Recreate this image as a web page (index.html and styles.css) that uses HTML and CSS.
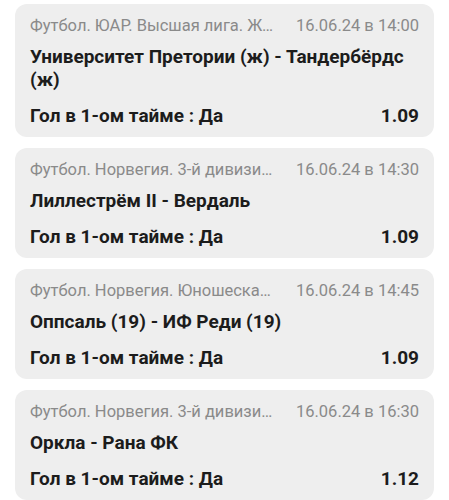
FILE: index.html
```html
<!DOCTYPE html>
<html lang="ru">
<head>
    <meta charset="UTF-8">
    <meta name="viewport" content="width=device-width, initial-scale=1.0">
    <title>Купон</title>
    <link rel="stylesheet" href="styles.css">
</head>
<body>
    <div class="bets">
        <!-- Bet card -->
        <div class="bet">
            <div class="bet-head">
                <span class="bet-league">Футбол. ЮАР. Высшая лига. Женщины</span>
                <span class="bet-date">16.06.24 в 14:00</span>
            </div>
            <div class="bet-match">Университет Претории (ж) - Тандербёрдс (ж)</div>
            <div class="bet-line">
                <span>Гол в 1-ом тайме : Да</span>
                <span class="bet-odd">1.09</span>
            </div>
        </div>

        <div class="bet">
            <div class="bet-head">
                <span class="bet-league">Футбол. Норвегия. 3-й дивизион</span>
                <span class="bet-date">16.06.24 в 14:30</span>
            </div>
            <div class="bet-match">Лиллестрём II - Вердаль</div>
            <div class="bet-line">
                <span>Гол в 1-ом тайме : Да</span>
                <span class="bet-odd">1.09</span>
            </div>
        </div>

        <div class="bet">
            <div class="bet-head">
                <span class="bet-league">Футбол. Норвегия. Юношеская лига</span>
                <span class="bet-date">16.06.24 в 14:45</span>
            </div>
            <div class="bet-match">Оппсаль (19) - ИФ Реди (19)</div>
            <div class="bet-line">
                <span>Гол в 1-ом тайме : Да</span>
                <span class="bet-odd">1.09</span>
            </div>
        </div>

        <div class="bet">
            <div class="bet-head">
                <span class="bet-league">Футбол. Норвегия. 3-й дивизион</span>
                <span class="bet-date">16.06.24 в 16:30</span>
            </div>
            <div class="bet-match">Оркла - Рана ФК</div>
            <div class="bet-line">
                <span>Гол в 1-ом тайме : Да</span>
                <span class="bet-odd">1.12</span>
            </div>
        </div>
    </div>
</body>
</html>
```

FILE: styles.css
```css
/* Basic Reset */
body {
    font-family: Roboto, "Noto Sans", Arial, sans-serif;
    margin: 0;
    padding: 0;
    background-color: #fff;
    color: #1c1c1c;
}

/* List of bets */
.bets {
    display: flex;
    flex-direction: column;
    gap: 11px;
    padding: 4px 15px 0;
}

/* Single bet card */
.bet {
    background-color: #eeeeee;
    border-radius: 12px;
    padding: 12px 15px 10px;
}

/* League and date */
.bet-head {
    display: flex;
    gap: 18px;
    font-size: 16.5px;
    line-height: 20px;
    color: #8a8a8a;
}

.bet-league {
    flex: 1;
    min-width: 0;
    white-space: nowrap;
    overflow: hidden;
    text-overflow: ellipsis;
}

.bet-date {
    white-space: nowrap;
}

/* Teams */
.bet-match {
    margin-top: 9px;
    font-size: 19px;
    line-height: 23px;
    font-weight: bold;
}

/* Outcome and odd */
.bet-line {
    display: flex;
    justify-content: space-between;
    margin-top: 13px;
    font-size: 19px;
    line-height: 23px;
    font-weight: bold;
}
```
